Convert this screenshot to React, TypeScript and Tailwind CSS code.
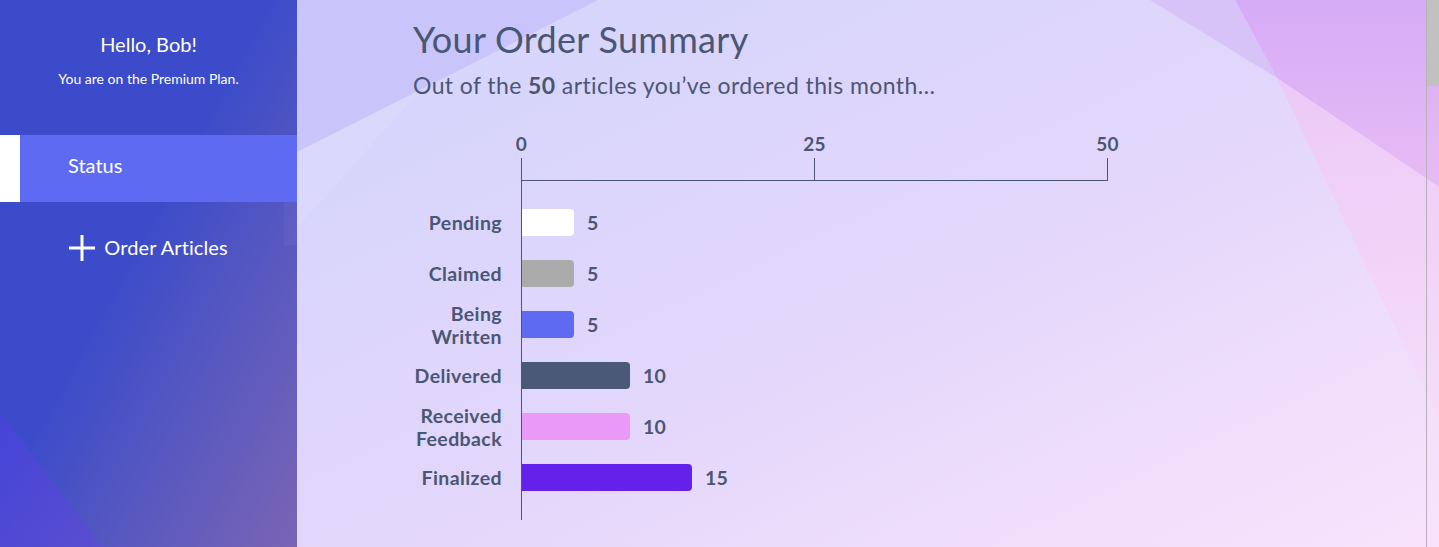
import React from "react";

const rows = [
    { label: ["Pending"], value: 5, width: 52, color: "bg-white" },
    { label: ["Claimed"], value: 5, width: 52, color: "bg-[#ababab]" },
    { label: ["Being", "Written"], value: 5, width: 52, color: "bg-[#5f6af2]" },
    { label: ["Delivered"], value: 10, width: 108, color: "bg-[#4a5978]" },
    { label: ["Received", "Feedback"], value: 10, width: 108, color: "bg-[#e99af9]" },
    { label: ["Finalized"], value: 15, width: 170, color: "bg-[#6421e9]" },
];

const ticks = [0, 25, 50];

function PlusIcon() {
    return (
        <svg width="26" height="26" viewBox="0 0 26 26" fill="white">
            <rect x="11.5" y="0" width="3" height="26" />
            <rect x="0" y="11.5" width="26" height="3" />
        </svg>
    );
}

function Sidebar() {
    return (
        <aside className="relative w-[297px] shrink-0 h-full overflow-hidden bg-linear-to-br from-[#3b4bc9] from-45% to-[#7a64b4] text-white">
            {/* decorative shapes */}
            <svg className="absolute inset-0" width="297" height="547" viewBox="0 0 297 547">
                <defs>
                    <linearGradient id="sbTri" x1="0" y1="0" x2="1" y2="1">
                        <stop offset="0" stopColor="#4444d8" />
                        <stop offset="1" stopColor="#5a4ed0" />
                    </linearGradient>
                </defs>
                <polygon points="0,412 0,547 102,547" fill="url(#sbTri)" />
                <polygon points="284,202 297,202 297,245 284,245" fill="#ffffff" opacity="0.04" />
            </svg>

            <div className="relative flex flex-col">
                <div className="h-[135px] flex flex-col items-center pt-[32px]">
                    <p className="text-[20px] leading-[24px]">Hello, Bob!</p>
                    <p className="mt-[14px] text-[14px] leading-[18px]">You are on the Premium Plan.</p>
                </div>

                <div className="flex h-[67px]">
                    <div className="w-[20px] bg-white" />
                    <div className="flex-1 flex items-center pl-[48px] pb-[8px] bg-[#5e6af1] text-[20px]">Status</div>
                </div>

                <div className="pt-[32px] flex items-center justify-center gap-[9px] h-[28px] box-content">
                    <PlusIcon />
                    <span className="text-[20px] leading-[28px] tracking-[0.1px] pb-[2px]">Order Articles</span>
                </div>
            </div>
        </aside>
    );
}

function Background() {
    return (
        <svg className="absolute inset-0" width="1142" height="547" viewBox="297 0 1142 547" preserveAspectRatio="none">
            <defs>
                <linearGradient id="darkTop" x1="0" y1="0" x2="0" y2="1">
                    <stop offset="0" stopColor="#d6abf7" />
                    <stop offset="1" stopColor="#e7bcf4" />
                </linearGradient>
                <linearGradient id="pinkBand" x1="0" y1="0" x2="0" y2="1">
                    <stop offset="0" stopColor="#efc6f6" />
                    <stop offset="1" stopColor="#f6dcf9" />
                </linearGradient>
            </defs>
            <polygon points="297,0 598,0 297,152" fill="#c4bff9" opacity="0.75" />
            <polygon points="297,152 420,90 297,228" fill="#ffffff" opacity="0.08" />
            <polygon points="1150,0 1235,0 1277,78" fill="#d8c3f9" />
            <polygon points="1235,0 1439,0 1439,187 1277,78" fill="url(#darkTop)" />
            <polygon points="1277,78 1439,187 1439,420" fill="url(#pinkBand)" opacity="0.8" />
        </svg>
    );
}

function Chart() {
    return (
        <div className="mt-[35px] text-[#4b5675] font-bold">
            {/* top axis */}
            <div className="flex">
                <div className="w-[108px] shrink-0" />
                <div className="w-[587px] flex justify-between">
                    {ticks.map((t) => (
                        <div key={t} className="w-px flex flex-col items-center">
                            <span className="text-[19px] leading-[18px] whitespace-nowrap tracking-[0.3px]">{t}</span>
                            <div className="mt-[5px] w-px h-[22px] bg-[#4b5675]" />
                        </div>
                    ))}
                </div>
            </div>
            <div className="ml-[108px] w-[587px] h-px bg-[#4b5675]" />

            {/* bars */}
            <div className="flex">
                <div className="w-[89px] mr-[19px] shrink-0 pt-[16px] flex flex-col">
                    {rows.map((r) => (
                        <div key={r.label.join(" ")} className="h-[51px] flex flex-col justify-center items-end text-right text-[19.5px] leading-[23px] tracking-[0.4px] whitespace-nowrap">
                            {r.label.map((l) => (
                                <span key={l}>{l}</span>
                            ))}
                        </div>
                    ))}
                </div>
                <div className="border-l border-[#4b5675] pt-[16px] pb-[17px] flex flex-col">
                    {rows.map((r) => (
                        <div key={r.label.join(" ")} className="h-[51px] flex items-center gap-[13px]">
                            <div className={`h-[27px] rounded-r-[4px] ${r.color}`} style={{ width: r.width }} />
                            <span className="text-[19.5px] leading-[23px] tracking-[0.3px]">{r.value}</span>
                        </div>
                    ))}
                </div>
            </div>
        </div>
    );
}

export default function App() {
    return (
        <div className="flex w-[1439px] h-[547px] overflow-hidden font-['Lato',sans-serif]">
            <Sidebar />
            <main className="relative flex-1 flex bg-linear-to-br from-[#d2d5fb] via-[#e2d6fb] to-[#f9e3fc]">
                <Background />
                <div className="relative flex-1 pl-[116px] pt-[19px] text-[#4b5675]">
                    <h1 className="text-[36px] leading-[40px] font-normal tracking-[0.3px]">Your Order Summary</h1>
                    <p className="mt-[11px] text-[23px] leading-[30px] tracking-[0.4px]">
                        Out of the <span className="font-bold">50</span> articles you’ve ordered this month…
                    </p>
                    <Chart />
                </div>
                {/* scrollbar */}
                <div className="relative w-[13px] shrink-0 border-l border-[#b3b3b3]">
                    <div className="h-[86px] bg-[#c1c1c1]" />
                </div>
            </main>
        </div>
    );
}
